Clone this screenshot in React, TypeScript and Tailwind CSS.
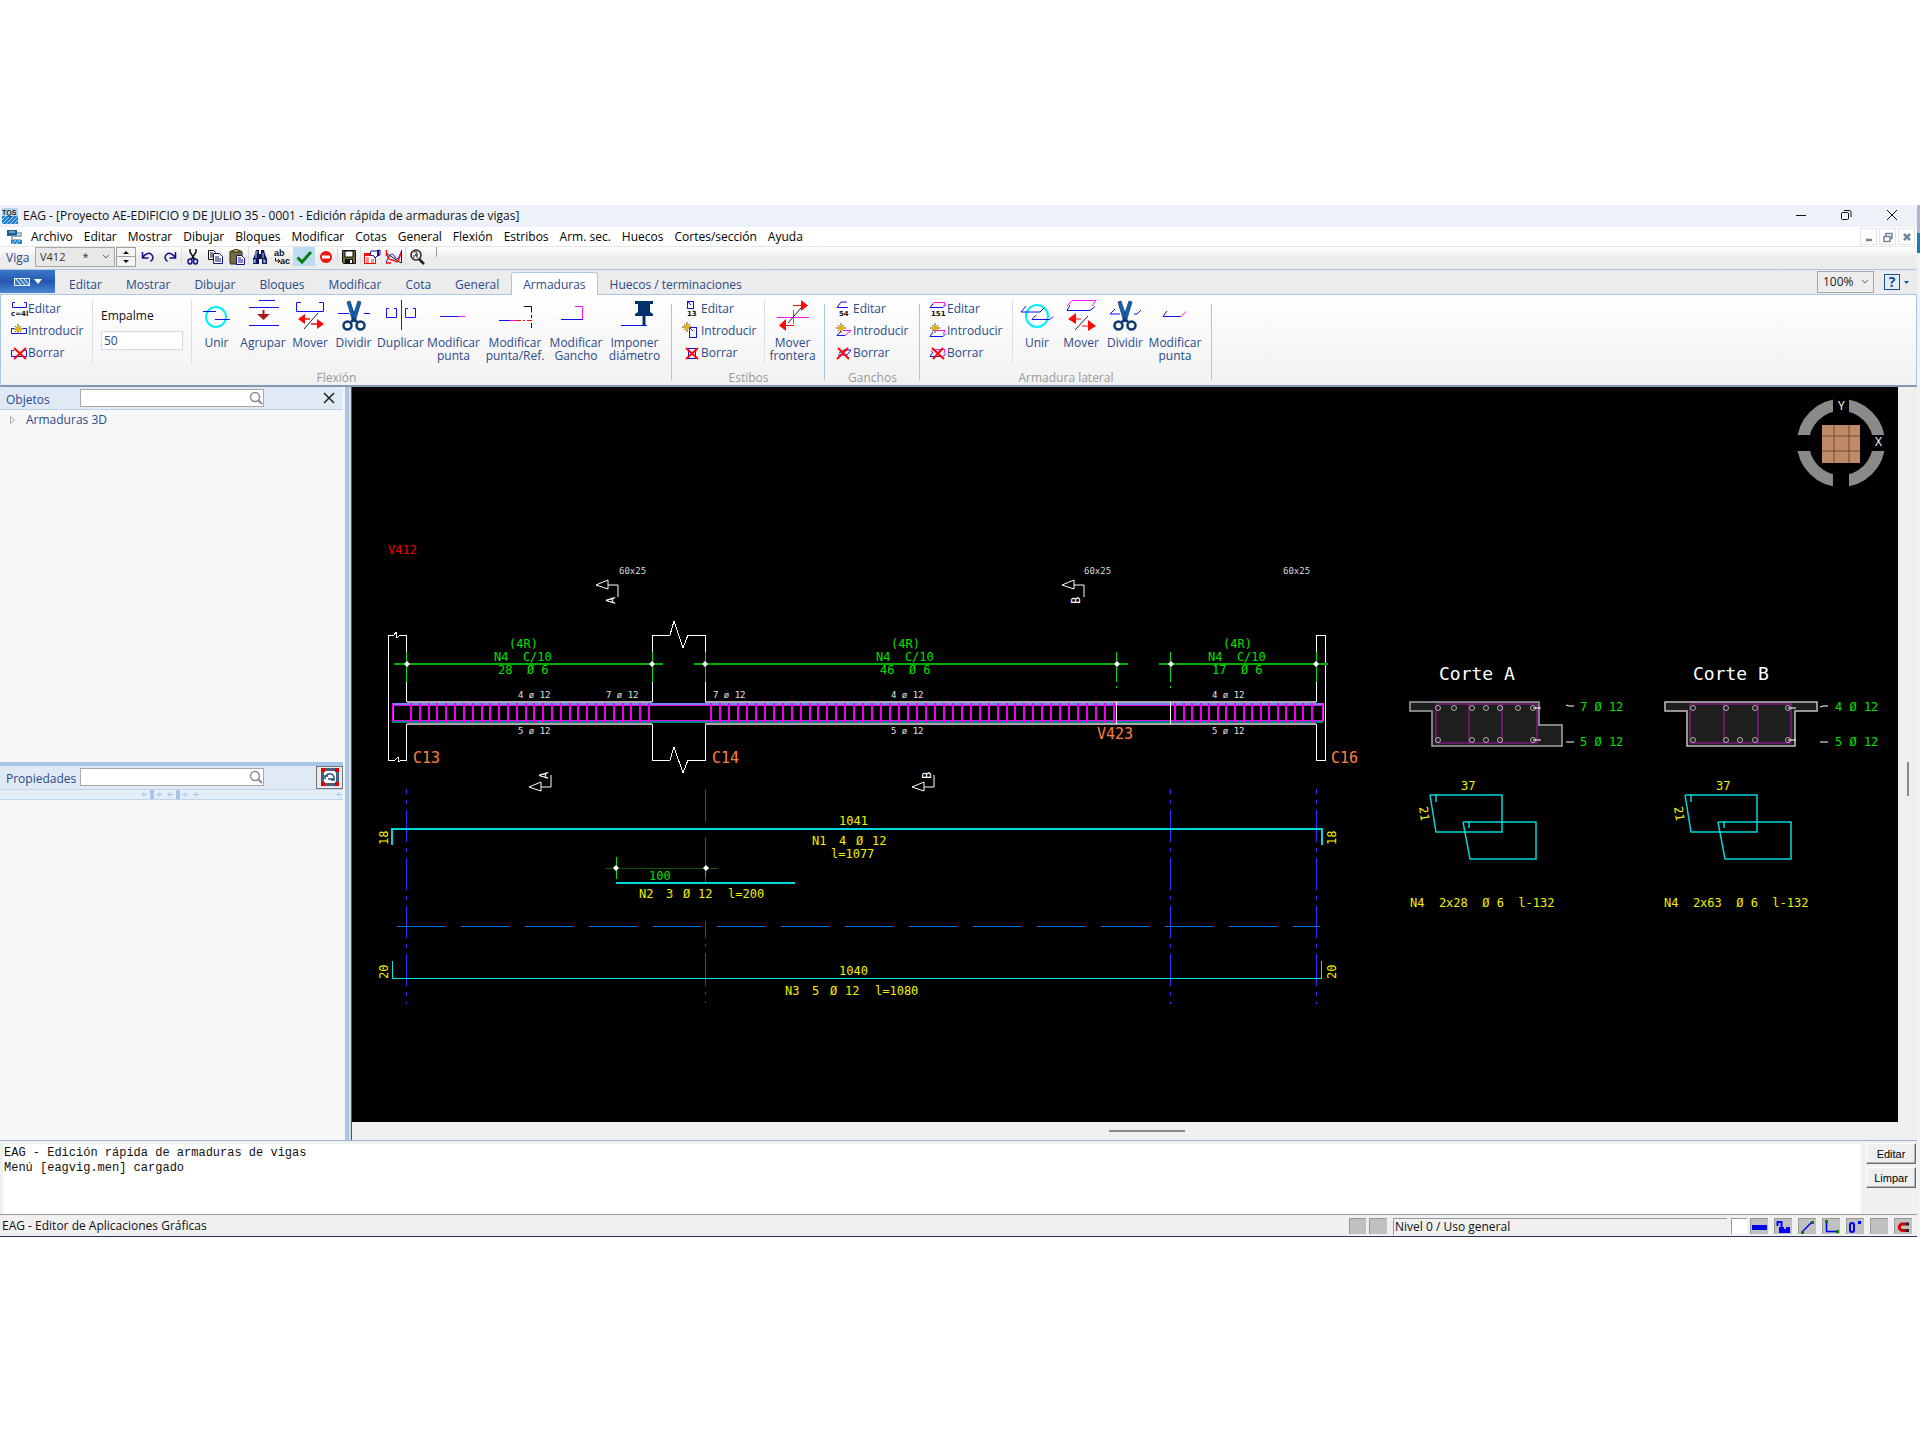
import React, { useState } from "react";

const MENU = [
  "Archivo", "Editar", "Mostrar", "Dibujar", "Bloques", "Modificar", "Cotas",
  "General", "Flexión", "Estribos", "Arm. sec.", "Huecos", "Cortes/sección", "Ayuda"
];

const TABS = [
  "Editar", "Mostrar", "Dibujar", "Bloques", "Modificar", "Cota", "General",
  "Armaduras", "Huecos / terminaciones"
];

const BLUE = "#1010f0";
const PINK = "#ff10ff";
const RED = "#ff0808";
const CYAN = "#00e5e5";
const GREEN = "#00e000";
const YELLOW = "#f0f000";

function Svg({ w, h, children }: { w: number; h: number; children: React.ReactNode }) {
  return (
    <svg width={w} height={h} viewBox={`0 0 ${w} ${h}`} fill="none" className="shrink-0 overflow-visible" aria-hidden="true">
      {children}
    </svg>
  );
}

/* ---------- toolbar icons, 18x18 ---------- */

const UndoIcon = () => (
  <Svg w={18} h={18}>
    <path d="M3.500 4v6h6M4 9C6 6 10 4 12.500 6.500s1.500 5-1 7" stroke="#10108a" strokeWidth="1.5" />
  </Svg>
);

const RedoIcon = () => (
  <Svg w={18} h={18}>
    <path d="M14.500 4v6h-6M14 9C12 6 8 4 5.500 6.500s-1.500 5 1 7" stroke="#10108a" strokeWidth="1.5" />
  </Svg>
);

const CutIcon = () => (
  <Svg w={18} h={18}>
    <path d="M6 1v3l5 8M12 1v3l-5 8" stroke="#111" strokeWidth="1.5" />
    <ellipse cx="6" cy="13.500" rx="2" ry="2.500" stroke="#10108a" strokeWidth="1.500" />
    <ellipse cx="11.500" cy="13.500" rx="2" ry="2.500" stroke="#10108a" strokeWidth="1.500" />
  </Svg>
);

const CopyIcon = () => (
  <Svg w={18} h={18}>
    <path d="M2.500 2.500h5l2 2v7h-7z" fill="#fff" stroke="#111" />
    <path d="M4 5h3M4 7h4M4 9h3" stroke="#111" />
    <path d="M7.500 5.500h6l3 3v7h-9z" fill="#fff" stroke="#10108a" />
    <path d="M9 9h4M9 11h6M9 13h6" stroke="#10108a" />
  </Svg>
);

const PasteIcon = () => (
  <Svg w={18} h={18}>
    <rect x="2" y="3" width="12" height="13" rx="1" fill="#77703a" stroke="#222" />
    <path d="M5 4h6V2H9L8 1 7 2H5z" fill="#e8d840" stroke="#222" />
    <path d="M8.500 7.500h5l3 3v6h-8z" fill="#fff" stroke="#10108a" />
    <path d="M10 10h3M10 12h5M10 14h5" stroke="#10108a" />
  </Svg>
);

const FindIcon = () => (
  <Svg w={18} h={18}>
    <path d="M5 2h3v4h2V2h3l1 4 2 5v5h-5v-5H8v5H2v-5l2-5z" fill="#14145a" />
    <path d="M5 5v5M4 11v4M12 5v5M13 11v4M6 3v2M3 12v3M14 12v3" stroke="#9fe0f0" />
  </Svg>
);

const ReplaceIcon = () => (
  <Svg w={18} h={18}>
    <text x="1" y="8" fontSize="9" fontWeight="700" fill="#111" className="font-['Liberation_Sans',sans-serif]">ab</text>
    <text x="7" y="16" fontSize="9" fontWeight="700" fill="#111" className="font-['Liberation_Sans',sans-serif]">ac</text>
    <path d="M2.500 10v3h4M5 11l2 2-2 2" stroke="#111" />
  </Svg>
);

const CheckIcon = () => (
  <Svg w={18} h={18}>
    <path d="M2.500 9.500l4.500 4.500 9-10" stroke="#087c10" strokeWidth="3" />
  </Svg>
);

const StopIcon = () => (
  <Svg w={18} h={18}>
    <circle cx="9" cy="9" r="6" fill="#f01414" />
    <rect x="5" y="7.500" width="8" height="3" fill="#fff" />
  </Svg>
);

const SaveIcon = () => (
  <Svg w={18} h={18}>
    <path d="M2.500 2.500h13v13h-12l-1-1z" fill="#6e6e30" stroke="#111" />
    <rect x="5" y="3" width="8" height="6" fill="#fff" stroke="#111" />
    <rect x="5" y="11" width="8" height="5" fill="#111" />
    <rect x="10" y="12" width="2" height="3" fill="#fff" />
  </Svg>
);

const PropsIcon = () => (
  <Svg w={18} h={18}>
    <rect x="1.500" y="5.500" width="11" height="10" fill="#fff" stroke={RED} />
    <path d="M2 7h10" stroke={RED} strokeWidth="2" />
    <path d="M3 10h3M3 12h3M3 14h3M8 12h3M8 14h3" stroke="#d03030" />
    <path d="M8 3h5l4-1v5l-3 1-2 2-1-2-4-1z" fill="#fff" stroke="#10108a" />
    <path d="M15 2v6" stroke="#10108a" strokeWidth="2" />
  </Svg>
);

const CurveIcon = () => (
  <Svg w={18} h={18}>
    <path d="M1 5l15 10M16.500 2v13" stroke="#222" />
    <path d="M1 15C5 4 8 5 10 9s4 1 6-5" stroke={BLUE} />
    <path d="M2 7c3 8 5 3 8 6s4-3 6-8" stroke={RED} strokeWidth="1.500" />
    <path d="M1.500 2v6M1 15h5" stroke={RED} strokeWidth="1.500" />
  </Svg>
);

const ZoomIcon = () => (
  <Svg w={18} h={18}>
    <circle cx="8" cy="7" r="5" stroke="#222" strokeWidth="1.500" fill="#f4f4f4" />
    <path d="M6 4h3v3H7h2v3M6 10V7" stroke="#222" />
    <path d="M11 11l5 5" stroke="#222" strokeWidth="2.500" />
  </Svg>
);

/* ---------- small ribbon icons, 18x16 ---------- */

const Digits = ({ x, t }: { x: number; t: string }) => (
  <text x={x} y="15" fontSize="7" fontWeight="700" fill="#111" className="font-['DejaVu_Sans',sans-serif]">{t}</text>
);

const Spark = ({ x, y }: { x: number; y: number }) => (
  <g transform={`translate(${x} ${y})`}>
    <path d="M0-5V5M-5 0H5M-3-3L3 3M3-3L-3 3" stroke="#6b5200" />
    <circle r="2.500" fill="#e8b400" />
  </g>
);

const Cross = () => <path d="M4 3l12 11M16 3L4 14" stroke={RED} strokeWidth="2" />;

const FlexEdit = () => (
  <Svg w={18} h={16}>
    <path d="M5 1.500H2.500v5h14v-5H14" stroke={BLUE} />
    <Digits x={1} t="c=4l" />
  </Svg>
);
const FlexAdd = () => (
  <Svg w={18} h={16}>
    <path d="M4 5.500H1.500v5h15v-5H13" stroke={BLUE} />
    <Spark x={8} y={6} />
  </Svg>
);
const FlexDel = () => (
  <Svg w={18} h={16}>
    <path d="M4 5.500H1.500v6h15v-6H13" stroke={BLUE} />
    <Cross />
  </Svg>
);
const StirEdit = () => (
  <Svg w={18} h={16}>
    <rect x="4.500" y=".5" width="6" height="7" stroke={BLUE} />
    <path d="M5 1l3 3" stroke={BLUE} />
    <Digits x={4} t="13" />
  </Svg>
);
const StirAdd = () => (
  <Svg w={18} h={16}>
    <rect x="6.500" y="4.500" width="7" height="10" stroke={BLUE} />
    <path d="M7 5l3 3" stroke={BLUE} />
    <Spark x={4} y={4} />
  </Svg>
);
const StirDel = () => (
  <Svg w={18} h={16}>
    <rect x="5.500" y="3.500" width="7" height="10" stroke={BLUE} />
    <path d="M3 3l12 11M15 3L3 14" stroke={RED} strokeWidth="2" />
  </Svg>
);
const HookEdit = () => (
  <Svg w={18} h={16}>
    <path d="M12 1H6L2 6.500h11" stroke={BLUE} />
    <Digits x={4} t="54" />
  </Svg>
);
const HookAdd = () => (
  <Svg w={18} h={16}>
    <path d="M6 8l-4 4.500h8" stroke={BLUE} />
    <path d="M10 12.500l6-5H8" stroke={PINK} />
    <Spark x={6} y={5} />
  </Svg>
);
const HookDel = () => (
  <Svg w={18} h={16}>
    <path d="M3 10h9l4-5H9L4 8" stroke={BLUE} />
    <path d="M3 3l11 11M13 3L2 14" stroke={RED} strokeWidth="2" />
  </Svg>
);
const SideEdit = () => (
  <Svg w={18} h={16}>
    <path d="M2 5l3-3.500h11l-1 3" stroke={PINK} />
    <path d="M4 3l-3 3.500h13l3-3" stroke={BLUE} />
    <Digits x={2} t="151" />
  </Svg>
);
const SideAdd = () => (
  <Svg w={18} h={16}>
    <path d="M4 7.500h12l-2 4" stroke={PINK} />
    <path d="M4 9l-3 4.500h13l3-3" stroke={BLUE} />
    <Spark x={6} y={5} />
  </Svg>
);
const SideDel = () => (
  <Svg w={18} h={16}>
    <path d="M2 7l3-2.500h11l-1 4" stroke={PINK} />
    <path d="M4 7l-3 4.500h13l3-3" stroke={BLUE} />
    <path d="M3 3l12 11M14 3L4 14" stroke={RED} strokeWidth="2" />
  </Svg>
);

/* ---------- large ribbon icons, 34x34 ---------- */

const Scissors = () => (
  <g>
    <path d="M10 3l3-1 6 18-3 3z" fill="#1560b0" stroke="#0a3468" strokeWidth=".7" />
    <path d="M24 3l-3-1-6 18 3 3z" fill="#1560b0" stroke="#0a3468" strokeWidth=".7" />
    <circle cx="10.500" cy="26.500" r="4" stroke="#0e3a70" strokeWidth="2.500" />
    <circle cx="23.500" cy="26.500" r="4" stroke="#0e3a70" strokeWidth="2.500" />
    <path d="M14 23l3-3 3 3" stroke="#0e3a70" strokeWidth="2.500" />
  </g>
);

const JoinIcon = () => (
  <Svg w={34} h={34}>
    <circle cx="16" cy="18" r="10" stroke="#00f0ff" strokeWidth="2" />
    <path d="M3 12.500h13M15 20.500h15" stroke={BLUE} />
  </Svg>
);
const GroupIcon = () => (
  <Svg w={34} h={34}>
    <path d="M13 1.500h16M3 8.500h30M3 26.500h30" stroke={BLUE} />
    <path d="M17.500 11v6" stroke="#b01818" strokeWidth="2" />
    <path d="M11 15l6.500 6L24 15z" fill="#b01818" />
  </Svg>
);
const MoveIcon = () => (
  <Svg w={34} h={34}>
    <path d="M8 3.500H3.500v9h27v-9H26" stroke={BLUE} />
    <path d="M25 14L11 30" stroke="#222" />
    <path d="M5 20l7-5v10zM31 25l-7-5v10z" fill={RED} />
    <path d="M10 20h7M18 25h7" stroke={RED} strokeWidth="1.500" />
  </Svg>
);
const SplitIcon = () => (
  <Svg w={34} h={34}>
    <path d="M1 14.500h11M27 14.500h6" stroke={BLUE} />
    <Scissors />
  </Svg>
);
const DuplicateIcon = () => (
  <Svg w={34} h={34}>
    <path d="M17.500 1v30" stroke="#333" />
    <path d="M5 9.500H2.500v9h10v-9H10M24 9.500h-2.500v9h10v-9H29" stroke={BLUE} />
  </Svg>
);
const TipIcon = () => (
  <Svg w={34} h={34}>
    <path d="M3 17.500h18" stroke={BLUE} />
    <path d="M21 17.500h7" stroke={PINK} />
  </Svg>
);
const TipRefIcon = () => (
  <Svg w={44} h={34}>
    <path d="M6 21.500h11" stroke={BLUE} />
    <path d="M17 21.500h6" stroke={PINK} />
    <path d="M23 21.500h16" stroke={RED} strokeDasharray="5 2 2 2" />
    <path d="M31 7.500h7.500v6M38.500 16v3M38.500 24v5" stroke="#111" />
  </Svg>
);
const HookTipIcon = () => (
  <Svg w={34} h={34}>
    <path d="M2 20.500h22" stroke={BLUE} />
    <path d="M16 7.500h7.500v13" stroke={PINK} />
  </Svg>
);
const PinIcon = () => (
  <Svg w={46} h={34}>
    <path d="M9 26.500h26" stroke={BLUE} />
    <path d="M23 2h18v3h-3v8l3 2v2H23v-2l3-2V5h-3z" fill="#04336c" />
    <path d="M32 16v10" stroke="#04336c" strokeWidth="3" />
  </Svg>
);
const BorderIcon = () => (
  <Svg w={34} h={34}>
    <path d="M1 18.500h32M17.500 11v14" stroke={PINK} />
    <path d="M12 24L25 9" stroke="#222" />
    <path d="M32 6.500L25 1v11zM3 26.500L10 20v12z" fill={RED} />
    <path d="M17 6.500h9M9 26.500h9" stroke={RED} />
  </Svg>
);
const SideJoinIcon = () => (
  <Svg w={34} h={34}>
    <circle cx="17" cy="17" r="11" stroke="#00f0ff" strokeWidth="2" />
    <path d="M6 7l-5 6h19l4-4M16 16l-4 4.500h18l3-3" stroke={BLUE} />
  </Svg>
);
const SideMoveIcon = () => (
  <Svg w={34} h={34}>
    <path d="M3 7l5-5.500h24L28 7" stroke={PINK} />
    <path d="M6 6l-3 5.500h23l5-4" stroke={BLUE} />
    <path d="M24 17L11 31" stroke="#222" />
    <path d="M4 20l8-6v11zM32 27l-8-6v11z" fill={RED} />
    <path d="M10 20h7M18 27h8" stroke={RED} />
  </Svg>
);
const SideSplitIcon = () => (
  <Svg w={34} h={34}>
    <path d="M7 10l-5 5h10M26 15h3l4-4" stroke={BLUE} />
    <Scissors />
  </Svg>
);
const SideTipIcon = () => (
  <Svg w={34} h={34}>
    <path d="M9 12l-4 5.500h18" stroke={BLUE} />
    <path d="M23 17.500l5-5" stroke={PINK} />
  </Svg>
);

/* ---------- chrome pieces ---------- */

function Tool({ name, children, on }: { name: string; children: React.ReactNode; on?: boolean }) {
  return (
    <button type="button" aria-label={name} className={`flex h-[19px] w-[22px] items-center justify-center ${on ? "bg-[#bcdcf4]" : ""}`}>
      {children}
    </button>
  );
}

function SmallCommands({ prefix, icons }: { prefix: string; icons: React.ReactNode[] }) {
  const names = ["Editar", "Introducir", "Borrar"];
  return (
    <div className={`flex flex-col items-start pt-[3px] ${prefix}`}>
      {names.map((n, i) => (
        <button key={n} type="button" className="flex h-[22px] items-center whitespace-nowrap">
          {icons[i]}
          <span>{n}</span>
        </button>
      ))}
    </div>
  );
}

function BigCommand({ icon, lines, width }: { icon: React.ReactNode; lines: string[]; width: string }) {
  return (
    <button type="button" className={`flex flex-col items-center pt-[4px] ${width}`}>
      {icon}
      <span className="pt-[3px] text-center leading-[13px] whitespace-pre">{lines.join("\n")}</span>
    </button>
  );
}

function Group({ title, children }: { title: string; children: React.ReactNode }) {
  return (
    <div className="relative flex flex-col pb-[2px]">
      <div className="flex h-[77px] items-start">{children}</div>
      <div className="text-center leading-[11px] text-[#9a9a9a]">{title}</div>
      <span className="absolute top-[9px] right-0 bottom-[5px] w-px bg-[#a9c6e6]" />
    </div>
  );
}

const Divider = () => <span className="mt-[5px] h-[64px] w-px shrink-0 bg-[#d8dfe8]" />;

function SearchBox({ id, label }: { id: string; label: string }) {
  return (
    <>
      <label htmlFor={id} className="w-[74px] shrink-0 pt-[3px] text-[#2b4a8a]">{label}</label>
      <span className="relative flex">
        <input id={id} type="text" className="h-[18px] w-[184px] border border-[#a8a8a8] bg-white pr-5 pl-1 outline-none" />
        <svg width="14" height="14" viewBox="0 0 14 14" fill="none" className="absolute top-[2px] right-[1px]" aria-hidden="true">
          <circle cx="6" cy="6" r="4.500" stroke="#8a8a8a" strokeWidth="1.500" />
          <path d="M9 9l4 4" stroke="#8a8a8a" strokeWidth="2" />
        </svg>
      </span>
    </>
  );
}

/* ---------- drawing ---------- */

type Label = { x: number; y: number; t: string; c?: string; s?: number; r?: number };

const LABELS: Label[] = [
  { x: 388, y: 554, t: "V412", c: "#f00000" },
  { x: 619, y: 574, t: "60x25", c: "#d8d8d8", s: 9 },
  { x: 1084, y: 574, t: "60x25", c: "#d8d8d8", s: 9 },
  { x: 1283, y: 574, t: "60x25", c: "#d8d8d8", s: 9 },
  { x: 615, y: 604, t: "A", c: "#ffffff", r: -90 },
  { x: 1080, y: 604, t: "B", c: "#ffffff", r: -90 },
  { x: 548, y: 779, t: "A", c: "#ffffff", r: -90 },
  { x: 931, y: 779, t: "B", c: "#ffffff", r: -90 },
  { x: 509, y: 648, t: "(4R)", c: GREEN },
  { x: 494, y: 661, t: "N4  C/10", c: GREEN },
  { x: 498, y: 674, t: "28  Ø 6", c: GREEN },
  { x: 891, y: 648, t: "(4R)", c: GREEN },
  { x: 876, y: 661, t: "N4  C/10", c: GREEN },
  { x: 880, y: 674, t: "46  Ø 6", c: GREEN },
  { x: 1223, y: 648, t: "(4R)", c: GREEN },
  { x: 1208, y: 661, t: "N4  C/10", c: GREEN },
  { x: 1212, y: 674, t: "17  Ø 6", c: GREEN },
  { x: 518, y: 698, t: "4 ø 12", c: "#e0e0e0", s: 9 },
  { x: 606, y: 698, t: "7 ø 12", c: "#e0e0e0", s: 9 },
  { x: 713, y: 698, t: "7 ø 12", c: "#e0e0e0", s: 9 },
  { x: 891, y: 698, t: "4 ø 12", c: "#e0e0e0", s: 9 },
  { x: 1212, y: 698, t: "4 ø 12", c: "#e0e0e0", s: 9 },
  { x: 518, y: 734, t: "5 ø 12", c: "#e0e0e0", s: 9 },
  { x: 891, y: 734, t: "5 ø 12", c: "#e0e0e0", s: 9 },
  { x: 1212, y: 734, t: "5 ø 12", c: "#e0e0e0", s: 9 },
  { x: 413, y: 763, t: "C13", c: "#ff8040", s: 15 },
  { x: 712, y: 763, t: "C14", c: "#ff8040", s: 15 },
  { x: 1331, y: 763, t: "C16", c: "#ff8040", s: 15 },
  { x: 1097, y: 739, t: "V423", c: "#ff8040", s: 15 },
  { x: 388, y: 845, t: "18", r: -90 },
  { x: 1336, y: 845, t: "18", r: -90 },
  { x: 388, y: 979, t: "20", r: -90 },
  { x: 1336, y: 979, t: "20", r: -90 },
  { x: 839, y: 825, t: "1041" },
  { x: 831, y: 858, t: "l=1077" },
  { x: 649, y: 880, t: "100", c: GREEN },
  { x: 839, y: 975, t: "1040" },
  { x: 1439, y: 680, t: "Corte A", c: "#ffffff", s: 18 },
  { x: 1693, y: 680, t: "Corte B", c: "#ffffff", s: 18 },
  { x: 1580, y: 711, t: "7 Ø 12", c: GREEN },
  { x: 1580, y: 746, t: "5 Ø 12", c: GREEN },
  { x: 1835, y: 711, t: "4 Ø 12", c: GREEN },
  { x: 1835, y: 746, t: "5 Ø 12", c: GREEN },
  { x: 1461, y: 790, t: "37" },
  { x: 1716, y: 790, t: "37" },
  { x: 1419, y: 807, t: "21", r: 82 },
  { x: 1674, y: 807, t: "21", r: 82 },
  { x: 1410, y: 907, t: "N4  2x28  Ø 6  l-132" },
  { x: 1664, y: 907, t: "N4  2x63  Ø 6  l-132" }
];

// bar captions: each field sits in its own column
const CAPTIONS = [
  { y: 845, parts: [[812, "N1"], [839, "4"], [856, "Ø"], [872, "12"]] },
  { y: 898, parts: [[639, "N2"], [666, "3"], [683, "Ø"], [698, "12"], [728, "l=200"]] },
  { y: 995, parts: [[785, "N3"], [812, "5"], [830, "Ø"], [845, "12"], [875, "l=1080"]] }
];

const STIRRUPS = [
  { from: 411, to: 649, n: 28 },
  { from: 711, to: 1114, n: 46 },
  { from: 1175, to: 1312, n: 17 }
];

const stirrupPath = STIRRUPS.flatMap(s =>
  Array.from({ length: s.n }, (_, i) => `M${Math.round(s.from + ((s.to - s.from) * i) / (s.n - 1))} 703V723`)
).join("");

function CutMark({ x, y, up }: { x: number; y: number; up?: boolean }) {
  return (
    <path
      d={`M${x} ${y}l12-5v9zM${x + 12} ${y}h10v${up ? -12 : 12}`}
      stroke="#fff"
    />
  );
}

function Node({ x, y }: { x: number; y: number }) {
  return <path d={`M${x - 3} ${y}l3-3 3 3-3 3z`} fill="#fff" />;
}

function Bars({ top, bottom }: { top: number[]; bottom: number[] }) {
  return (
    <g stroke="#b0b0b0">
      {top.map(x => <circle key={`t${x}`} cx={x} cy={708} r={2.5} />)}
      {bottom.map(x => <circle key={`b${x}`} cx={x} cy={740} r={2.5} />)}
    </g>
  );
}

function StirrupShape({ x }: { x: number }) {
  return (
    <g stroke="#00d8d8" strokeWidth="1.500" transform={`translate(${x} 0)`}>
      <path d="M0 795H72V832H6L0 795M6 794V802" />
      <path d="M33 822H106V859H40L33 822M39 821V828" />
    </g>
  );
}

function Drawing() {
  return (
    <svg viewBox="352 387 1546 735" fill="none" className="block w-full bg-black" role="img" aria-label="Viga V412">
      <g shapeRendering="crispEdges">
        {/* columns */}
        <path d="M406.500 702V635H400L397 638 396 632 394 635H388.500V760H395L398 757 399 762 401 760H406.500V724" stroke="#fff" />
        <path d="M652.500 702V635H670L674 621 683 648 688 635H705.500V702M652.500 724V760H670L674 747 683 773 688 760H705.500V724" stroke="#fff" />
        <path d="M1316.500 702V635H1325.500V760H1316.500V724" stroke="#fff" />
        {/* beam */}
        <path d="M407 702H652M705 702H1316M407 724H652M705 724H1316" stroke="#a8a8a8" strokeWidth="2" />
        <path d="M392 704H1323" stroke="#6f86ff" strokeWidth="2" />
        <path d="M392 722H1323" stroke="#008878" strokeWidth="2" />
        <path d="M393 705V721M1323 703V721" stroke="#00c8e8" />
        <path d="M392 705.500H1322M392 720.500H1322M392 703V721M1322 703V721" stroke="#f000f0" />
        <path d={stirrupPath} stroke="#f000f0" strokeWidth="2" />
        <path d="M1116.500 702V724M1170.500 702V724" stroke="#fff" />
        {/* stirrup dimension lines */}
        <path d="M394 664H663M694 664H1128M1159 664H1328" stroke="#00b000" strokeWidth="2" />
        <path d="M406.500 652V682M652.500 652V682M705.500 652V682M1116.500 652V682M1170.500 652V682M1316.500 652V682M1116.500 686V688M1170.500 686V688" stroke="#00e000" />
        {/* axes */}
        <g stroke="#3a2cff">
          <path d="M406.500 789V1004M1170.500 789V1004M1316.500 789V1004" strokeDasharray="32 6 4 6" strokeDashoffset="27" />
          <path d="M705.500 789V822M705.500 837V882M705.500 921V938M705.500 944V947M705.500 953V986M705.500 992V995M705.500 1001V1003" />
        </g>
        <path d="M397 926.500H1320" stroke="#0070e8" strokeDasharray="48 16" strokeWidth="1.500" />
        {/* bars */}
        <path d="M392 845V829H1322V845" stroke="#00d8d8" strokeWidth="1.500" />
        <path d="M392 961V978.500H1321.500V961" stroke={CYAN} />
        <path d="M616 883H795" stroke="#00d8d8" strokeWidth="1.500" />
        <path d="M606 868H718" stroke="#145200" />
        <path d="M616.500 857V879M705.500 868V877" stroke="#00e000" />
      </g>
      {[407, 652, 705, 1117, 1171, 1316].map(x => <Node key={x} x={x} y={664} />)}
      <Node x={616} y={868} />
      <Node x={706} y={868} />
      <CutMark x={596} y={585} />
      <CutMark x={1062} y={585} />
      <CutMark x={529} y={787} up />
      <CutMark x={912} y={787} up />

      {/* section A */}
      <path d="M1410 702H1539V725H1562V746H1432V711H1410Z" fill="#1e1e1e" stroke="#a8a8a8" strokeWidth="1.500" />
      <path d="M1436 704H1537V743H1436ZM1469 704V743M1502 704V743" stroke="#a818a8" />
      <Bars top={[1438, 1454, 1472, 1486, 1500, 1518, 1533]} bottom={[1438, 1472, 1486, 1500, 1533]} />
      <path d="M1533 708h8M1533 740h8M1566 705l3 1h5M1566 742h8" stroke="#fff" />
      {/* section B */}
      <path d="M1665 702H1817V711H1795V746H1687V711H1665Z" fill="#1e1e1e" stroke="#c0c0c0" strokeWidth="1.500" />
      <path d="M1690 704H1791V743H1690ZM1724 704V743M1758 704V743" stroke="#a818a8" />
      <Bars top={[1693, 1726, 1755, 1788]} bottom={[1693, 1726, 1740, 1755, 1788]} />
      <path d="M1788 708h8M1788 740h8M1820 707l3-1h5M1820 742h8" stroke="#fff" />
      <StirrupShape x={1430} />
      <StirrupShape x={1685} />

      {/* view orientation ring */}
      <circle cx="1841" cy="443" r="38" stroke="#8a8a8a" strokeWidth="12" />
      <path d="M1841 395V491M1793 443H1889" stroke="#000" strokeWidth="16" />
      <rect x="1822" y="425" width="38" height="38" fill="#c08a68" />
      <path d="M1834 425V463M1849 425V463M1822 436H1860M1822 451H1860" stroke="#6a4c3a" />
      <g fill="#fff" fontSize="12" className="font-['Open_Sans',sans-serif]">
        <text x="1838" y="410">Y</text>
        <text x="1875" y="446">X</text>
      </g>

      <g className="font-['DejaVu_Sans_Mono',monospace]">
        {LABELS.map((l, i) => (
          <text
            key={i}
            x={l.x}
            y={l.y}
            fill={l.c ?? YELLOW}
            fontSize={l.s ?? 12}
            transform={l.r ? `rotate(${l.r} ${l.x} ${l.y})` : undefined}
            className="whitespace-pre"
          >
            {l.t}
          </text>
        ))}
        {CAPTIONS.map(c => (
          <text key={c.y} y={c.y} fill={YELLOW} fontSize="12">
            {c.parts.map(([x, t]) => <tspan key={x} x={x}>{t}</tspan>)}
          </text>
        ))}
      </g>
    </svg>
  );
}

/* ---------- status cells ---------- */

const STATUS_CELLS: { name: string; draw: React.ReactNode }[] = [
  { name: "Línea", draw: <path d="M1 8.500h15" stroke="#0000ff" strokeWidth="5" /> },
  { name: "Bloqueo", draw: <><path d="M2.500 7V3h4v5" stroke="#0000ff" strokeWidth="2" /><rect x="4" y="8" width="11" height="6" fill="#0000ff" /><path d="M9 8h2v2H9z" fill="#c0c0c0" /></> },
  { name: "Segmento", draw: <><path d="M3 13L13 3" stroke="#0000ff" strokeWidth="1.500" /><path d="M2 12h3v3H2zM12 2h3v3h-3z" fill="#008000" /></> },
  { name: "Ortogonal", draw: <><path d="M3.500 2v10.500H15" stroke="#0000ff" strokeWidth="1.500" /><path d="M2 1h3v3H2zM13 11h3v3h-3z" fill="#008000" /></> },
  { name: "Ángulo", draw: <><rect x="3" y="4" width="4" height="9" rx="2" stroke="#0000ff" strokeWidth="2" /><path d="M11 2h3v3h-3z" fill="#0000ff" /></> },
  { name: "Vacío", draw: null },
  { name: "Imán", draw: <><path d="M11 5H7.500a3 3 0 000 6.500H11" stroke="#d00000" strokeWidth="3" /><path d="M11 5h3M11 11.500h3" stroke="#222" strokeWidth="3" /></> }
];

export default function App() {
  const [tab, setTab] = useState("Armaduras");
  const [splice, setSplice] = useState("50");

  return (
    <div className="min-h-screen bg-white pt-[205px] font-['Open_Sans','Noto_Sans',sans-serif] text-[12px] leading-[16px] text-[#111]">
      <div className="flex">
        <div className="min-w-0 flex-1 border-b border-[#27355a] bg-[#f0f0f0]">
          {/* title bar */}
          <header className="flex h-[22px] items-center bg-[#edf2f9] pl-[2px]">
            <Svg w={16} h={16}>
              <rect width="16" height="16" fill="#b9d8f0" />
              <rect y="8" width="16" height="8" fill="#1c7fd6" />
              <path d="M0 16l8-8M4 16l8-8M8 16l8-8M12 16l4-4M0 12l4-4" stroke="#fff" strokeWidth=".7" />
              <text x="0" y="7" fontSize="7" fontWeight="700" fill="#222" className="font-['Liberation_Sans',sans-serif]">TQS</text>
            </Svg>
            <h1 className="pl-[5px] whitespace-nowrap">EAG - [Proyecto AE-EDIFICIO 9 DE JULIO 35 - 0001 - Edición rápida de armaduras de vigas]</h1>
            <div className="ml-auto flex h-full items-center pr-px pb-[3px]">
              <button type="button" aria-label="Minimizar" className="flex w-[45px] justify-center">
                <Svg w={12} h={12}><path d="M1 6.500h10" stroke="#111" /></Svg>
              </button>
              <button type="button" aria-label="Restaurar" className="flex w-[45px] justify-center">
                <Svg w={12} h={12}>
                  <rect x="1.500" y="3.500" width="7" height="7" rx="1" stroke="#111" />
                  <path d="M4 1.500h5a2 2 0 012 2V8" stroke="#111" />
                </Svg>
              </button>
              <button type="button" aria-label="Cerrar" className="flex w-[48px] justify-center">
                <Svg w={12} h={12}><path d="M1 1l10 10M11 1L1 11" stroke="#111" /></Svg>
              </button>
            </div>
          </header>

          {/* menu */}
          <nav className="flex h-[20px] items-center border-b border-[#e6e6e6] bg-white pl-[7px]">
            <Svg w={16} h={16}>
              <rect x="0" y="1" width="10" height="6" fill="#1b5f96" />
              <path d="M2 3h6" stroke="#bfe0f4" />
              <path d="M10 4h4v3H5v4h9" stroke="#7d96a8" strokeWidth="1.500" />
              <rect x="4" y="11" width="11" height="4" fill="#2a8ad8" />
              <path d="M5 15l4-4M9 15l4-4" stroke="#fff" strokeWidth=".7" />
            </Svg>
            <ul className="flex gap-[11px] pl-[8px] text-black">
              {MENU.map(m => <li key={m}><button type="button" className="whitespace-nowrap">{m}</button></li>)}
            </ul>
            <div className="ml-auto flex gap-[2px] pr-[2px]">
              {[
                ["Minimizar documento", "M5 11h6", 2.5],
                ["Restaurar documento", "M4 7.500h6v5h-6zM6 7V4.500h6v5h-2", 1.5],
                ["Cerrar documento", "M5 5l6 6M11 5l-6 6", 2.5]
              ].map(([n, d, w]) => (
                <button key={n} type="button" aria-label={String(n)} className="flex h-[17px] w-[17px] items-center justify-center border border-[#e4e4e4]">
                  <Svg w={16} h={16}><path d={String(d)} stroke="#74849a" strokeWidth={w} /></Svg>
                </button>
              ))}
            </div>
          </nav>

          {/* quick toolbar */}
          <div className="flex h-[23px] items-start border-b border-[#a9c6e6] bg-linear-to-b from-white via-[#ececec] to-[#ececec] pl-[6px]">
            <label htmlFor="viga" className="w-[29px] pt-[3px] text-[#2b4a8a]">Viga</label>
            <span className="relative flex">
              <select id="viga" className="h-[20px] w-[80px] appearance-none border border-[#a8a8a8] bg-[#e8e8e8] pl-[4px] text-[11px] text-[#333] outline-none">
                <option>{"V412\u00a0\u00a0\u00a0\u00a0\u00a0\u00a0*"}</option>
              </select>
              <svg width="8" height="6" viewBox="0 0 8 6" fill="none" className="pointer-events-none absolute top-[7px] right-[5px]" aria-hidden="true">
                <path d="M1 1l3 3 3-3" stroke="#666" />
              </svg>
            </span>
            <span className="mr-px ml-px flex w-[20px] flex-col border border-[#a0a0a0] bg-[#f4f4f4]">
              <button type="button" aria-label="Viga anterior" className="flex h-[9px] items-center justify-center border-b border-[#a0a0a0]">
                <Svg w={6} h={3}><path d="M0 3l3-3 3 3z" fill="#111" /></Svg>
              </button>
              <button type="button" aria-label="Viga siguiente" className="flex h-[9px] items-center justify-center">
                <Svg w={6} h={3}><path d="M0 0l3 3 3-3z" fill="#111" /></Svg>
              </button>
            </span>
            <Tool name="Deshacer"><UndoIcon /></Tool>
            <Tool name="Rehacer"><RedoIcon /></Tool>
            <span className="h-[19px] w-px bg-[#dcdcdc]" />
            <Tool name="Cortar"><CutIcon /></Tool>
            <Tool name="Copiar"><CopyIcon /></Tool>
            <Tool name="Pegar"><PasteIcon /></Tool>
            <span className="h-[19px] w-px bg-[#dcdcdc]" />
            <Tool name="Buscar"><FindIcon /></Tool>
            <Tool name="Reemplazar"><ReplaceIcon /></Tool>
            <Tool name="Aceptar" on><CheckIcon /></Tool>
            <Tool name="Cancelar"><StopIcon /></Tool>
            <span className="h-[19px] w-px bg-[#dcdcdc]" />
            <Tool name="Guardar"><SaveIcon /></Tool>
            <span className="h-[19px] w-px bg-[#dcdcdc]" />
            <Tool name="Propiedades"><PropsIcon /></Tool>
            <Tool name="Diagrama"><CurveIcon /></Tool>
            <span className="h-[19px] w-px bg-[#dcdcdc]" />
            <Tool name="Ampliar"><ZoomIcon /></Tool>
            <span className="ml-[8px] h-[10px] w-px bg-[#999]" />
          </div>

          {/* ribbon tabs */}
          <div className="flex h-[25px] items-stretch border-b border-[#a9c6e6] bg-[#ececec]">
            <button type="button" aria-label="Aplicación" className="mb-[1px] flex w-[55px] items-center justify-center gap-[4px] bg-linear-to-b from-[#3c78c8] via-[#2458b0] to-[#4a86d4]">
              <Svg w={16} h={8}>
                <rect x=".5" y=".5" width="15" height="7" fill="#3f78c4" stroke="#e8f2ff" />
                <path d="M2 1l5 6M6 1l5 6M10 1l5 6" stroke="#fff" />
              </Svg>
              <Svg w={8} h={5}><path d="M0 0h8L4 5z" fill="#fff" /></Svg>
            </button>
            <div role="tablist" className="-mb-px flex pl-[2px]">
              {TABS.map(t => (
                <button
                  key={t}
                  type="button"
                  role="tab"
                  aria-selected={t === tab}
                  onClick={() => setTab(t)}
                  className={`mt-[2px] rounded-t-[3px] border border-b-0 px-[11px] pt-[2px] whitespace-nowrap text-[#2b4a8a] ${t === tab ? "border-[#a9c6e6] bg-white" : "border-transparent"}`}
                >
                  {t}
                </button>
              ))}
            </div>
            <div className="ml-auto flex items-center gap-[10px] pr-[8px]">
              <span className="relative flex">
                <select aria-label="Escala" className="h-[22px] w-[57px] appearance-none border border-[#a8a8a8] bg-[#ededed] pl-[5px] text-[#222] outline-none">
                  <option>100%</option>
                </select>
                <svg width="8" height="6" viewBox="0 0 8 6" fill="none" className="pointer-events-none absolute top-[8px] right-[5px]" aria-hidden="true">
                  <path d="M1 1l3 3 3-3" stroke="#666" />
                </svg>
              </span>
              <button type="button" aria-label="Ayuda" className="flex items-center gap-[4px]">
                <span className="flex h-[16px] w-[16px] items-center justify-center border border-[#1a4f94] bg-[#e2eefa] text-[14px] leading-[14px] font-bold text-[#12509e]">?</span>
                <Svg w={5} h={3}><path d="M0 0h5L2.500 3z" fill="#1a4f94" /></Svg>
              </button>
            </div>
          </div>

          {/* ribbon */}
          <div className="flex border-x border-b-2 border-x-[#a9c6e6] border-b-[#8299b4] bg-linear-to-b from-white to-[#f1f1f1] text-[#2b4a8a]">
            <Group title="Flexión">
              <SmallCommands prefix="w-[91px] pl-[9px]" icons={[<FlexEdit />, <FlexAdd />, <FlexDel />]} />
              <Divider />
              <div className="flex w-[98px] flex-col pt-[13px] pl-[8px]">
                <label htmlFor="empalme" className="text-[#111]">Empalme</label>
                <input
                  id="empalme"
                  type="text"
                  value={splice}
                  onChange={e => setSplice(e.target.value)}
                  className="mt-[7px] h-[19px] w-[82px] border border-[#d4dbe4] bg-white pl-[2px] text-[#2b4a8a] outline-none"
                />
              </div>
              <Divider />
              <div className="flex pr-[6px] pl-[3px]">
                <BigCommand icon={<JoinIcon />} lines={["Unir"]} width="w-[43px]" />
                <BigCommand icon={<GroupIcon />} lines={["Agrupar"]} width="w-[50px]" />
                <BigCommand icon={<MoveIcon />} lines={["Mover"]} width="w-[44px]" />
                <BigCommand icon={<SplitIcon />} lines={["Dividir"]} width="w-[43px]" />
                <BigCommand icon={<DuplicateIcon />} lines={["Duplicar"]} width="w-[51px]" />
                <BigCommand icon={<TipIcon />} lines={["Modificar", "punta"]} width="w-[55px]" />
                <BigCommand icon={<TipRefIcon />} lines={["Modificar", "punta/Ref."]} width="w-[68px]" />
                <BigCommand icon={<HookTipIcon />} lines={["Modificar", "Gancho"]} width="w-[54px]" />
                <BigCommand icon={<PinIcon />} lines={["Imponer", "diámetro"]} width="w-[63px]" />
              </div>
            </Group>
            <Group title="Estibos">
              <SmallCommands prefix="w-[92px] pl-[11px]" icons={[<StirEdit />, <StirAdd />, <StirDel />]} />
              <Divider />
              <div className="pr-[5px]">
                <BigCommand icon={<BorderIcon />} lines={["Mover", "frontera"]} width="w-[55px]" />
              </div>
            </Group>
            <Group title="Ganchos">
              <SmallCommands prefix="w-[95px] pl-[10px]" icons={[<HookEdit />, <HookAdd />, <HookDel />]} />
            </Group>
            <Group title="Armadura lateral">
              <SmallCommands prefix="w-[92px] pl-[9px]" icons={[<SideEdit />, <SideAdd />, <SideDel />]} />
              <Divider />
              <div className="flex pr-[9px] pl-[2px]">
                <BigCommand icon={<SideJoinIcon />} lines={["Unir"]} width="w-[44px]" />
                <BigCommand icon={<SideMoveIcon />} lines={["Mover"]} width="w-[44px]" />
                <BigCommand icon={<SideSplitIcon />} lines={["Dividir"]} width="w-[44px]" />
                <BigCommand icon={<SideTipIcon />} lines={["Modificar", "punta"]} width="w-[56px]" />
              </div>
            </Group>
          </div>

          {/* workspace */}
          <main className="flex">
            <aside className="flex w-[345px] shrink-0 flex-col bg-[#f7f7f7] pr-[2px]">
              <section className="flex flex-1 flex-col">
                <div className="flex h-[23px] items-center border-b border-[#bcd4ec] bg-[#dfeaf4] pl-[6px]">
                  <SearchBox id="objetos" label="Objetos" />
                  <button type="button" aria-label="Cerrar panel" className="mr-[8px] ml-auto">
                    <Svg w={12} h={12}><path d="M1 1l10 10M11 1L1 11" stroke="#222" strokeWidth="1.500" /></Svg>
                  </button>
                </div>
                <ul>
                  <li className="flex h-[20px] items-center gap-[11px] pl-[10px] text-[#2b4a8a]">
                    <Svg w={5} h={8}><path d="M.5 .5v7l4-3.500z" stroke="#aaa" /></Svg>
                    Armaduras 3D
                  </li>
                </ul>
              </section>
              <div className="h-[4px] bg-[#a9c6e6]" />
              <section className="flex flex-1 flex-col">
                <div className="flex h-[23px] items-center bg-[#dfeaf4] pl-[6px]">
                  <SearchBox id="propiedades" label="Propiedades" />
                  <button type="button" aria-label="Actualizar selección" className="ml-auto flex h-[23px] w-[27px] items-center justify-center border border-[#777] bg-[#e8e8e8]">
                    <Svg w={20} h={20}>
                      <rect x="1" y="1" width="18" height="18" fill="#4a5f7e" />
                      <rect x="4" y="4" width="12" height="12" fill="#fff" />
                      <path d="M5 12V9h3M6 9c2-3 7-3 8 1v3h-3M8 12h6" stroke="#2a4f82" strokeWidth="1.500" />
                      <path d="M1 1h4v4H1zM15 1h4v4h-4zM1 15h4v4H1zM15 15h4v4h-4z" fill="#e00000" />
                    </Svg>
                  </button>
                </div>
                <div className="flex h-[11px] items-center border-y border-[#bcd4ec] bg-[#e4eef6]">
                  <svg width="60" height="9" viewBox="0 0 60 9" fill="none" className="ml-[141px]" aria-hidden="true">
                    <path d="M6 4.500H1l2.500-2.500M1 4.500L3.500 7M15 4.500h5l-2.500-2.500M20 4.500L17.500 7M32 4.500h-5l2.500-2.500M27 4.500L29.500 7M41 4.500h5l-2.500-2.500M46 4.500L43.500 7M58 4.500h-5l2.500-2.500M53 4.500L55.500 7" stroke="#a9c6e6" />
                    <path d="M9 0h4v9H9zM35 0h4v9h-4z" fill="#a9c6e6" />
                  </svg>
                  <svg width="6" height="9" viewBox="0 0 6 9" fill="none" className="mr-px ml-auto" aria-hidden="true">
                    <path d="M6 4.500H1l2.500-2.500M1 4.500L3.500 7" stroke="#a9c6e6" />
                  </svg>
                </div>
              </section>
            </aside>
            <div className="w-[4px] shrink-0 bg-[#a9c6e6]" />
            <div className="w-[3px] shrink-0 border-r border-[#555] bg-[#dcdcdc]" />
            <div className="flex min-w-0 flex-1">
              <div className="min-w-0 flex-1">
                <Drawing />
                <div className="flex h-[18px] items-center justify-center bg-[#efefef] pl-[44px]">
                  <div className="h-[2px] w-[76px] bg-[#8a8a8a]" />
                </div>
              </div>
              <div className="flex w-[19px] shrink-0 items-center justify-center bg-[#efefef] pt-[31px]">
                <div className="h-[34px] w-[2px] bg-[#8a8a8a]" />
              </div>
            </div>
          </main>

          {/* message log */}
          <div className="flex border-t border-[#9fb4cc] pt-[2px]">
            <div className="mt-px ml-[3px] h-[70px] flex-1 bg-white pt-[2px] pl-px font-['Liberation_Mono',monospace] leading-[15px]">
              <p>EAG - Edición rápida de armaduras de vigas</p>
              <p>Menú [eagvig.men] cargado</p>
            </div>
            <div className="flex flex-col gap-[3px] pr-px pl-[5px] font-['Liberation_Sans',sans-serif] text-[11px]">
              {["Editar", "Limpar"].map(b => (
                <button key={b} type="button" className="h-[21px] w-[50px] border border-t-white border-r-[#6e6e6e] border-b-[#6e6e6e] border-l-white bg-[#efefef] text-black shadow-[inset_-1px_-1px_0_#b0b0b0]">
                  {b}
                </button>
              ))}
            </div>
          </div>

          {/* status bar */}
          <footer className="flex h-[22px] items-center border-t border-[#9a9a9a] pt-px pl-[2px]">
            <span className="whitespace-nowrap">EAG - Editor de Aplicaciones Gráficas</span>
            <span className="ml-auto h-[16px] w-[17px] border-t border-l border-[#999] bg-[#c0c0c0]" />
            <span className="ml-[3px] h-[16px] w-[18px] border-t border-l border-[#999] bg-[#c0c0c0]" />
            <span className="ml-[6px] flex h-[17px] w-[334px] items-center border-t border-l border-[#999] pl-px whitespace-nowrap">Nivel 0 / Uso general</span>
            <span className="mr-[3px] ml-[4px] h-[16px] w-[16px] border-t border-l border-[#999] bg-white" />
            <div className="flex gap-[6px] pr-[5px]">
              {STATUS_CELLS.map(c => (
                <button key={c.name} type="button" aria-label={c.name} className="flex h-[16px] w-[18px] items-center justify-center border-t border-l border-[#999] bg-[#c0c0c0]">
                  <Svg w={17} h={16}>{c.draw}</Svg>
                </button>
              ))}
            </div>
          </footer>
        </div>

        {/* edge of the window behind */}
        <div className="flex w-[3px] shrink-0 flex-col">
          <div className="h-[28px] bg-[#a9b8d4]" />
          <div className="h-[20px] bg-[#1b7ab4]" />
          <div className="flex-1 bg-[#f2f2f2]" />
        </div>
      </div>
    </div>
  );
}
